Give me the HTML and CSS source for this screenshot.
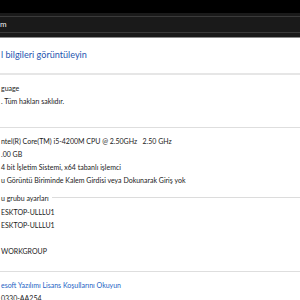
FILE: index.html
```html
<!DOCTYPE html>
<html lang="tr">
  <head>
    <meta charset="UTF-8" />
    <meta name="viewport" content="width=device-width, initial-scale=1.0" />
    <title>Sistem</title>
    <link rel="stylesheet" href="styles.css">
  </head>
  <body>
    <div class="titlebar"></div>
    <div class="toolbar">
      <div class="crumb">m</div>
    </div>
    <main class="panel">
      <h1 class="heading">l bilgileri görüntüleyin</h1>
      <div class="sep sep-thick"></div>

      <div class="group group-edition">
        <div class="row">guage</div>
        <div class="row">. Tüm hakları saklıdır.</div>
      </div>
      <div class="sep sep-sys"></div>

      <div class="group">
        <div class="row">ntel(R) Core(TM) i5-4200M CPU @ 2.50GHz&nbsp;&nbsp;&nbsp;2.50 GHz</div>
        <div class="row">.00 GB</div>
        <div class="row">4 bit İşletim Sistemi, x64 tabanlı işlemci</div>
        <div class="row">u Görüntü Biriminde Kalem Girdisi veya Dokunarak Giriş yok</div>
      </div>

      <div class="group-title">
        <span>u grubu ayarları</span>
        <span class="rule"></span>
      </div>
      <div class="group">
        <div class="row">ESKTOP-ULLLU1</div>
        <div class="row">ESKTOP-ULLLU1</div>
        <div class="row"></div>
        <div class="row">WORKGROUP</div>
      </div>
      <div class="sep sep-act"></div>

      <div class="group">
        <div class="row"><a class="link" href="#">esoft Yazılımı Lisans Koşullarını Okuyun</a></div>
        <div class="row">0330-AA254</div>
      </div>
    </main>
  </body>
</html>
```

FILE: styles.css
```css
html,
body {
  margin: 0;
  width: 300px;
  height: 300px;
  overflow: hidden;
  background: #ffffff;
  font-family: Lato, "Noto Sans", sans-serif;
  color: #1a1a1a;
}
.titlebar {
  height: 13px;
  background: #000000;
}
.toolbar {
  background: #1a1a1a;
  padding: 3px 0 4px;
  border-bottom: 1px solid #8a8a8a;
}
.crumb {
  height: 15px;
  line-height: 15px;
  border-top: 1px solid #3a3a3a;
  border-bottom: 1px solid #3a3a3a;
  color: #f2f2f2;
  font-size: 8px;
}
.panel {
  padding-left: 1px;
}
.heading {
  margin: 10px 0 0;
  font-size: 9.1px;
  line-height: 14px;
  font-weight: 400;
  color: #1f55b0;
}
.sep {
  height: 1px;
  background: #dedede;
  margin-left: -1px;
}
.sep-thick {
  height: 2px;
  margin-top: 11px;
  background: #e6e6e6;
}
.sep-sys {
  margin-top: 19px;
}
.sep-act {
  margin-top: 13px;
}
.group {
  padding-top: 7px;
}
.row {
  height: 13px;
  line-height: 13px;
  font-size: 7px;
  white-space: nowrap;
}
.group-title {
  display: flex;
  align-items: center;
  gap: 3px;
  margin-top: 4px;
  height: 13px;
  font-size: 7px;
  white-space: nowrap;
}
.group-title + .group {
  padding-top: 2px;
}
.rule {
  flex: 1;
  height: 1px;
  background: #dcdcdc;
}
.link {
  color: #1c5fc4;
  text-decoration: none;
}
```
